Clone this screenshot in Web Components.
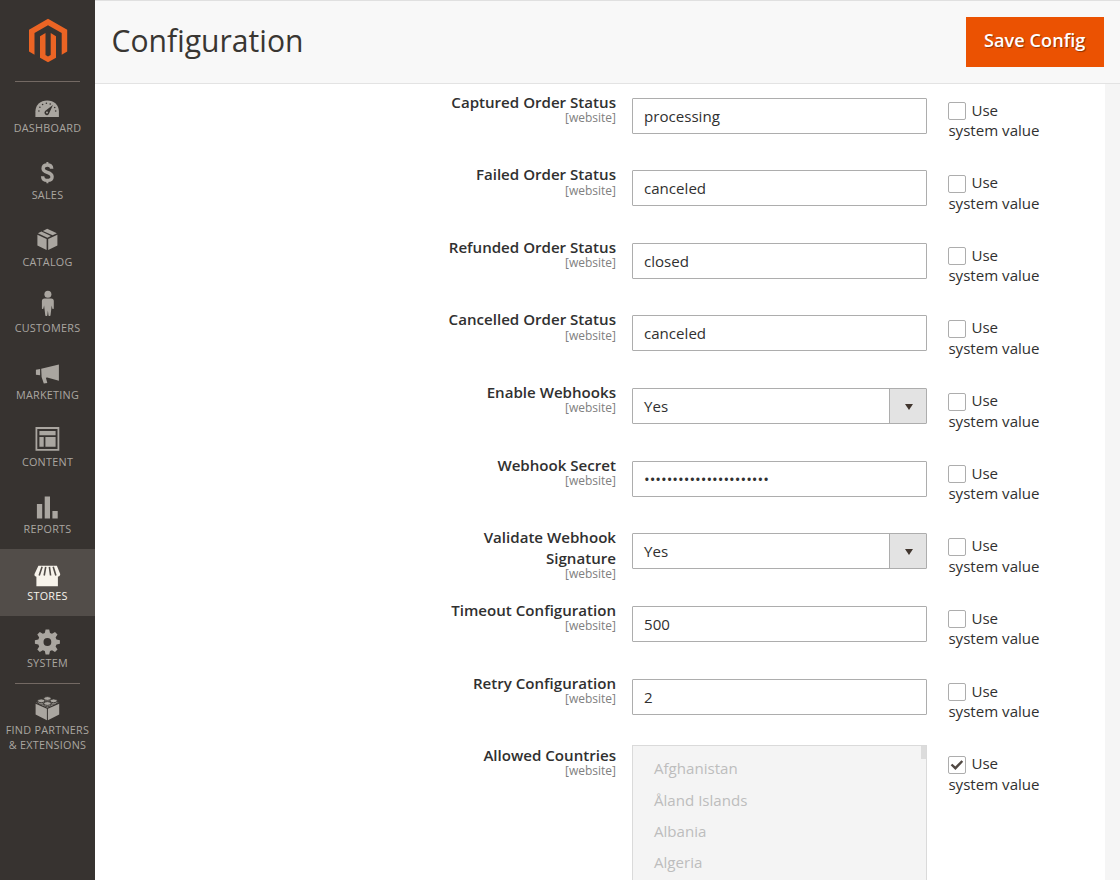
<!DOCTYPE html>
<html lang="en">
<head>
<meta charset="utf-8">
<title>Configuration</title>
<style>
body{margin:0;height:880px;overflow:hidden;font-family:"Open Sans","Noto Sans",sans-serif;color:#303030;background:#fff}
</style>
</head>
<body>
<admin-page></admin-page>
<script>
const define = (name, html, setup) => {
  const t = document.createElement('template');
  t.innerHTML = html;
  customElements.define(name, class extends HTMLElement {
    constructor() {
      super();
      this.attachShadow({mode: 'open'}).append(t.content.cloneNode(true));
    }
    connectedCallback() { if (setup) setup(this, this.shadowRoot); }
  });
};

const icons = {
  dashboard: '<path fill="currentColor" d="M1 18V12.5C1 6 6 1.5 12.8 1.5S24.500 6 24.500 12.500V18z"/><g fill="#373330"><circle cx="4.500" cy="12" r=".8"/><circle cx="5.500" cy="8.300" r=".8"/><circle cx="8.200" cy="5.500" r=".8"/><circle cx="12" cy="4.300" r=".8"/><circle cx="15.800" cy="5" r=".8"/><circle cx="20.300" cy="8.500" r=".8"/><circle cx="21.300" cy="12" r=".8"/><path d="M18.500 6L14.800 14.200A2.400 2.400 0 1 1 11 11.800z"/></g><circle cx="12.600" cy="13.600" r="1" fill="currentColor"/>',
  sales: '<path fill="none" stroke="currentColor" stroke-width="3.400" d="M17.300 7.500C17.200 4.700 15.500 3.800 13 3.800S8.700 5 8.700 7.300C8.700 9.800 10.600 10.400 13 11.200S17.700 12.800 17.700 15.500S15.800 19.200 13 19.200S8.300 18 8.200 15"/><path stroke="currentColor" stroke-width="2" d="M13 .8v4M13 18v4"/>',
  catalog: '<path fill="currentColor" d="M3 7.500l9.200 4.200v11L3 18.300zM23 7.500l-9.200 4.200v11L23 18.300zM3.500 6l3.500-1.700 9.500 4.500L13 10.400zM8.500 3.600L12.800 1.500 22.500 6l-4.300 2z"/>',
  customers: '<circle cx="13.500" cy="3.700" r="3.500" fill="currentColor"/><path fill="currentColor" d="M10.200 8h6.600q2.600 0 2.600 2.600V18q-.8 1.200-1.500 0L17.300 15 16.100 25q-1.200 1.200-2 0L13.500 20 12.900 25q-1 1.200-2 0L9.700 15 9 18q-.8 1.200-1.500 0V10.600Q7.500 8 10.200 8z"/>',
  marketing: '<path fill="currentColor" d="M1.500 7.200l4.200-.6v6.200l-4.200-.6zM6.800 6.300L24.500 2v16.200L12.800 15l-1.300.2 1.400 5.300-3.500.4L7.200 14.500z"/>',
  content: '<path fill="none" stroke="currentColor" stroke-width="1.800" d="M2 2h22v21.800H2z"/><path fill="currentColor" d="M5 5h16.200v4.300H5zM5 11h4.300v9.700H5zM11 11h10.200v9.700H11z"/>',
  reports: '<path fill="currentColor" d="M2.500 8.500h5.300V23H2.500zM10.300 1h5.300v22h-5.300zM18 15.500h5.300V23H18z"/>',
  stores: '<path fill="currentColor" d="M4 1.800h18.500l3.400 8.400q-.3 2.300-2.400 2.500V22.200H2V12.700Q-.3 12.300 0 10.200z"/><path fill="none" stroke="#524d49" stroke-width="1.600" d="M7.700 2.800L4.800 11.500M11.300 2.800L9.800 11.500M15 2.800L16.200 11.500M18.800 2.800L21.500 11.500"/>',
  system: '<path fill="currentColor" fill-rule="evenodd" d="M11.200 1h3.600l.8 3.500 2 .8 3-1.900 2.500 2.500-1.900 3 .9 2.100 3.400.7v3.500l-3.400.8-.9 2.100 1.900 2.900-2.500 2.500-3-1.800-2 .8-.8 3.400h-3.600l-.8-3.400-2-.8-3 1.800L2.900 21l1.900-2.900L3.900 16 .5 15.200v-3.500L3.900 11l.9-2.100-1.900-3 2.500-2.500 3 1.900 2-.8zM13 9.600a3.900 3.900 0 1 0 0 7.800 3.900 3.900 0 1 0 0-7.800z"/>',
  partners: '<path fill="currentColor" d="M1.200 7.800l11.300 5v11.400L1.200 18.600zM24.800 7.800l-11.300 5v11.400l11.300-5.600zM1.800 6.500L13 1.700l11.200 4.800L13 11.700z"/><g fill="currentColor" stroke="#373330" stroke-width=".9"><path d="M9.300 2.300v2.500c1.500 1.700 6 1.700 7.400 0V2.300"/><ellipse cx="13" cy="2.500" rx="3.600" ry="1.900"/><path d="M3.200 4.500V7c1.500 1.700 6 1.700 7.200 0V4.500"/><ellipse cx="6.800" cy="4.800" rx="3.600" ry="1.900"/><path d="M15.600 4.500V7c1.500 1.700 6 1.700 7.200 0V4.500"/><ellipse cx="19.200" cy="4.800" rx="3.600" ry="1.900"/><path d="M9.400 7.200V9.500c1.500 1.700 6 1.700 7.200 0V7.200"/><ellipse cx="13" cy="7.500" rx="3.600" ry="1.900"/></g>'
};

define('menu-item', `<style>
:host{display:flex;flex-direction:column;align-items:center;box-sizing:border-box;height:66.9px;padding-top:14px;color:#aaa6a0}
:host([active]){background:#524d49;color:#f7f3eb}
svg{display:block;width:26px;height:26px;flex:none;overflow:visible}
span{font-size:10.8px;line-height:15px;letter-spacing:.27px;text-align:center;white-space:nowrap;margin-top:-1.200px}
</style><svg viewBox="0 0 26 26"></svg><span><slot></slot></span>`, (el, root) => {
  const svg = root.querySelector('svg');
  svg.innerHTML = icons[el.getAttribute('icon')];
  svg.style.transform = `translate(-.6px,${el.getAttribute('shift') || 0}px)`;
});

define('side-menu', `<style>
:host{display:block;width:95px;flex:none;height:880px;background:#373330}
.logo{display:flex;justify-content:center;padding-top:18px;height:63px;box-sizing:content-box}
.logo svg{width:40px;height:45px}
hr{width:65px;height:1px;border:0;margin:0 auto;background:#736963}
menu-item[icon=partners]{margin-top:-1px}
</style>
<div class="logo"><svg viewBox="0 0 40 45"><path fill="#eb6424" d="M20 .8L39.200 11.800V33.500L33.700 36.700V15L20 7.200 6.500 15V36.700L1 33.500V11.800z"/><path fill="#eb6424" d="M12 18.200L17.500 15V37L20 38.500 22.700 37V15L28 18.200V39.800L20 44.300 12 39.800z"/></svg></div>
<hr>
<menu-item icon="dashboard" shift="4" style="margin-top:-1px">DASHBOARD</menu-item>
<menu-item icon="sales" shift="-.8">SALES</menu-item>
<menu-item icon="catalog" shift="-1.700">CATALOG</menu-item>
<menu-item icon="customers" shift="-5.500">CUSTOMERS</menu-item>
<menu-item icon="marketing" shift="-.5">MARKETING</menu-item>
<menu-item icon="content" shift="-3">CONTENT</menu-item>
<menu-item icon="reports" shift="-.5">REPORTS</menu-item>
<menu-item icon="stores" shift="1" active>STORES</menu-item>
<menu-item icon="system" shift="-1.500">SYSTEM</menu-item>
<hr>
<menu-item icon="partners" shift="-1">FIND PARTNERS<br>&amp; EXTENSIONS</menu-item>`);

define('page-header', `<style>
:host{display:flex;box-sizing:border-box;height:84px;border-top:1px solid #e0e0e0;border-bottom:1px solid #e3e3e3;background:#f8f8f8;padding:0 16px 0 16.500px;justify-content:space-between;align-items:flex-start}
h1{margin:19px 0 0;font-size:30.100px;line-height:42px;font-weight:400;color:#393632}
button{margin:16px 0 0;width:138.500px;height:50px;border:0;padding:0 0 4.500px;background:#eb5202;color:#fff;font:600 18.100px "Open Sans",sans-serif;letter-spacing:.05px;text-shadow:1px 1px 1px rgba(0,0,0,.4);white-space:nowrap}
</style><h1>Configuration</h1><button>Save Config</button>`);

define('use-default', `<style>
:host{display:block;width:97px;font-size:15.100px;line-height:20.400px}
i{display:inline-block;position:relative;box-sizing:border-box;width:18px;height:18px;border:1px solid #adadad;border-radius:2px;background:#fff;vertical-align:-4.500px;margin-right:5px}
svg{display:none;position:absolute;left:1px;top:2px;width:14px;height:12px}
:host([checked]) svg{display:block}
</style><i><svg viewBox="0 0 14 12"><path d="M1.500 5.500L5.400 9.200 12.300 2" fill="none" stroke="#514943" stroke-width="2.400"/></svg></i>Use system value`);

define('config-field', `<style>
:host{display:grid;grid-template-columns:168px 295px 97px;column-gap:16px;height:72.610px;align-items:start}
.label{margin-top:-6px;text-align:right;font-size:15.100px;line-height:20.400px;font-weight:600}
small{display:block;font-size:12px;line-height:15px;margin-top:-2.100px;font-weight:400;color:#808080}
use-default{margin:2px 0 0 5.400px}
</style><div class="label"><span></span><small>[website]</small></div><slot></slot><use-default></use-default>`, (el, root) => {
  root.querySelector('span').textContent = el.getAttribute('label');
  if (el.hasAttribute('inherited')) root.querySelector('use-default').setAttribute('checked', '');
});

define('text-input', `<style>
:host{display:block;box-sizing:border-box;height:36px;border:1px solid #adadad;border-radius:1px;background:#fff;padding:0 11px;font-size:15.100px;line-height:35px}
</style><slot></slot>`);

define('select-input', `<style>
:host{display:flex;box-sizing:border-box;height:36px;border:1px solid #adadad;border-radius:1px;background:#fff;padding-left:11px;font-size:15.100px;line-height:35px;justify-content:space-between}
b{display:flex;width:36px;border-left:1px solid #adadad;background:#e3e3e3;align-items:center;justify-content:center}
b::before{content:"";border:4.500px solid transparent;border-top:6px solid #41362f;border-bottom:0;margin:2px 0 0 1px}
</style><span><slot></slot></span><b></b>`);

define('multi-select', `<style>
:host{display:flex;justify-content:space-between;box-sizing:border-box;height:200px;margin-top:-6.500px;border:1px solid #dadada;background:#f4f4f4;color:#bdbdbd;font-size:15.100px;line-height:31.300px;padding:7.800px 0 0 21px}
i{width:5px;height:13px;margin-top:-7.800px;background:#dcdcdc}
::slotted(div){height:31.300px}
</style><div><slot></slot></div><i></i>`);

define('admin-page', `<style>
:host{display:flex;height:880px;overflow:hidden}
main{flex:1;min-width:0;background:#f5f5f5}
section{box-sizing:border-box;width:1010px;height:796px;background:#fff;padding:13.650px 0 0 353px;overflow:hidden}
</style><side-menu></side-menu><main><page-header></page-header><section>
<config-field label="Captured Order Status"><text-input>processing</text-input></config-field>
<config-field label="Failed Order Status"><text-input>canceled</text-input></config-field>
<config-field label="Refunded Order Status"><text-input>closed</text-input></config-field>
<config-field label="Cancelled Order Status"><text-input>canceled</text-input></config-field>
<config-field label="Enable Webhooks"><select-input>Yes</select-input></config-field>
<config-field label="Webhook Secret"><text-input>••••••••••••••••••••••</text-input></config-field>
<config-field label="Validate Webhook Signature"><select-input>Yes</select-input></config-field>
<config-field label="Timeout Configuration"><text-input>500</text-input></config-field>
<config-field label="Retry Configuration"><text-input>2</text-input></config-field>
<config-field label="Allowed Countries" inherited><multi-select><div>Afghanistan</div><div>Åland Islands</div><div>Albania</div><div>Algeria</div></multi-select></config-field>
</section></main>`);
</script>
</body>
</html>
